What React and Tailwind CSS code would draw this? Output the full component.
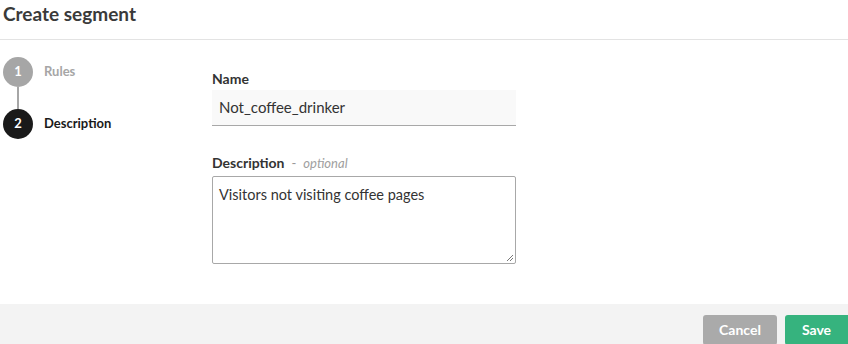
export default function App() {
  const font = { fontFamily: "Lato, 'Noto Sans', sans-serif" };
  return (
    <div className="w-[848px] h-[344px] bg-white overflow-hidden flex flex-col text-[#333]" style={font}>
      <div className="h-[40px] border-b border-[#e3e3e3] px-[3px] flex items-start pt-[1px]">
        <h1 className="text-[19px] font-bold text-[#3a3a3a] leading-[26px]">Create segment</h1>
      </div>
      <div className="flex-1 flex">
        <div className="w-[212px] pl-[3px] pt-[17px] flex flex-col">
          <div className="flex items-center">
            <div className="w-[30px] h-[30px] rounded-full bg-[#a6a6a6] text-white text-[13px] font-bold flex items-center justify-center">1</div>
            <span className="ml-[11px] text-[13px] font-bold text-[#a6a6a6]">Rules</span>
          </div>
          <div className="ml-[14px] w-[2px] h-[22px] bg-[#a6a6a6]"></div>
          <div className="flex items-center">
            <div className="w-[30px] h-[30px] rounded-full bg-[#1a1a1a] text-white text-[13px] font-bold flex items-center justify-center">2</div>
            <span className="ml-[11px] text-[13px] font-bold text-[#1a1a1a]">Description</span>
          </div>
        </div>
        <div className="flex flex-col pt-[30px]">
          <label className="text-[14px] font-bold text-[#333] leading-[18px]">Name</label>
          <div className="mt-[2px] w-[304px] h-[36px] bg-[#f9f9f9] border-b border-[#a8a8a8] flex items-center px-[7px] text-[15px] text-[#333]">
            Not_coffee_drinker
          </div>
          <div className="mt-[28px] flex items-baseline leading-[18px]">
            <span className="text-[14px] font-bold text-[#333]">Description</span>
            <span className="ml-[7px] text-[13px] text-[#999]">-</span>
            <span className="ml-[7px] text-[13px] italic text-[#a0a0a0]">optional</span>
          </div>
          <div className="mt-[4px] w-[304px] h-[88px] border border-[#a8a8a8] rounded-[2px] relative px-[6px] pt-[7px] text-[14.5px] text-[#333]">
            Visitors not visiting coffee pages
            <svg className="absolute right-[1px] bottom-[1px]" width="9" height="9" viewBox="0 0 9 9">
              <path d="M8 2 L2 8 M8 5 L5 8" stroke="#777" strokeWidth="1" />
            </svg>
          </div>
        </div>
      </div>
      <div className="h-[40px] bg-[#f3f3f3] flex justify-end items-start pt-[11px]">
        <button className="w-[74px] h-[30px] bg-[#aaaaaa] text-white text-[14px] font-bold rounded-[3px] leading-[28px]">Cancel</button>
        <button className="ml-[8px] w-[63px] h-[30px] bg-[#36b37e] text-white text-[14px] font-bold rounded-l-[3px] leading-[28px]">Save</button>
      </div>
    </div>
  );
}
